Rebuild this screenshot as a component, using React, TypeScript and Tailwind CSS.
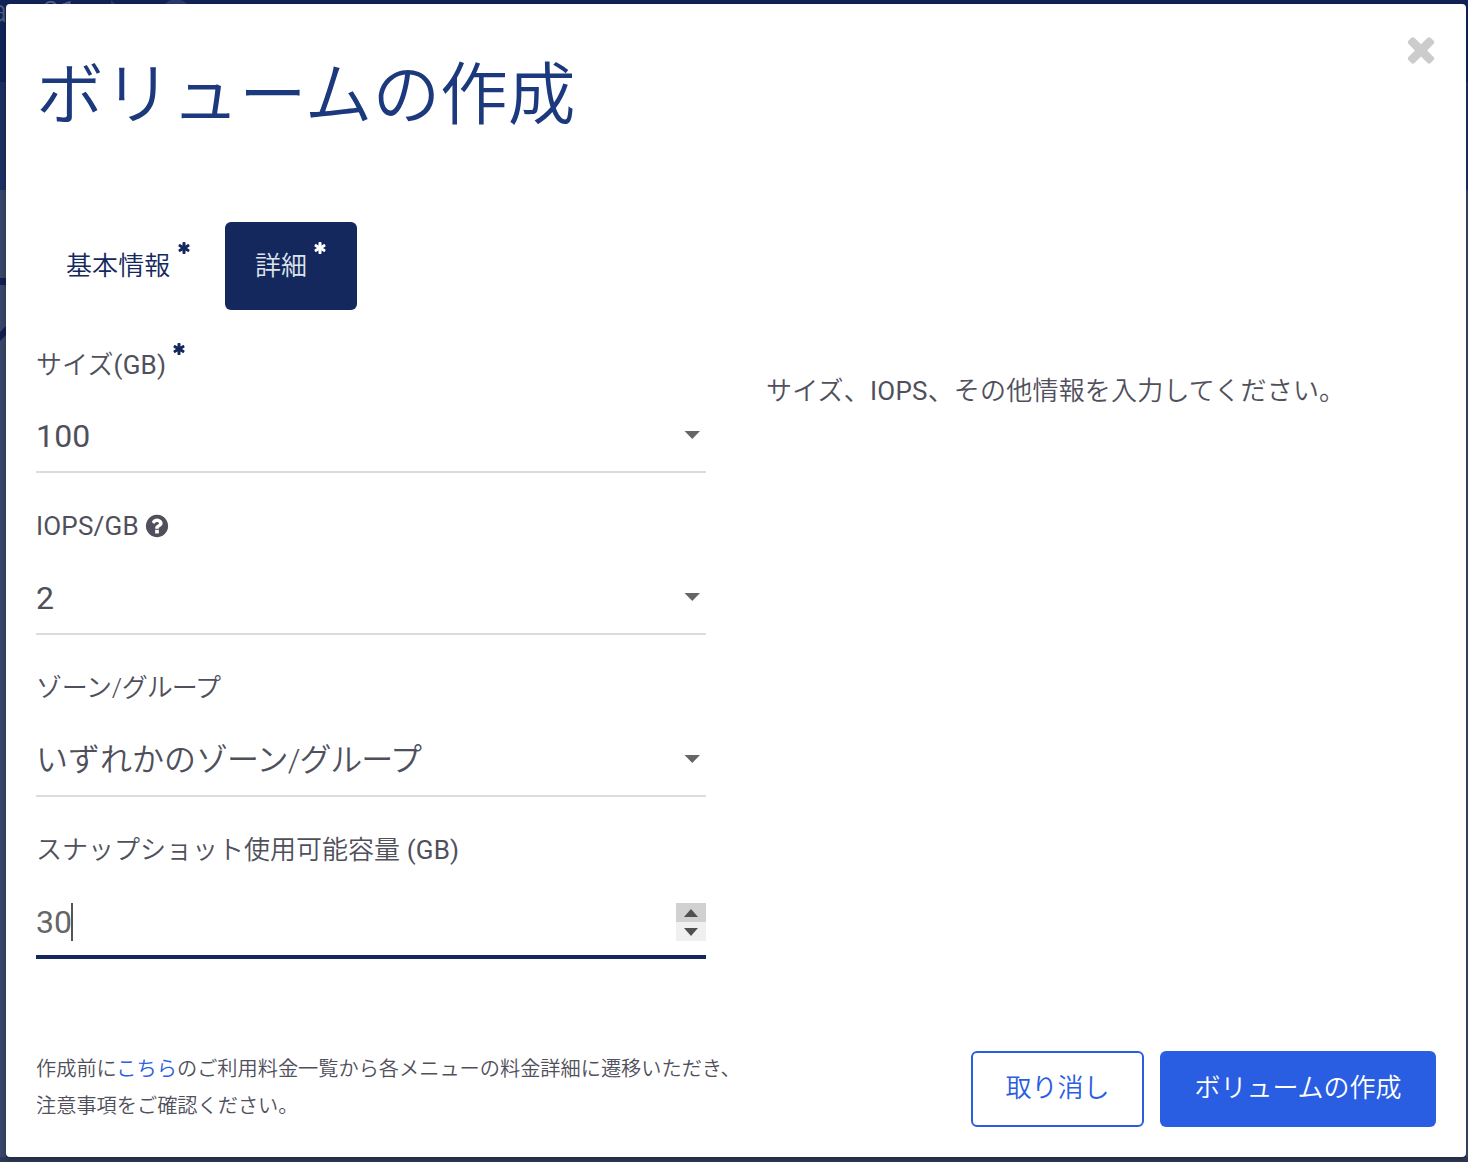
import type { ReactNode } from "react";

interface IconProps {
  className?: string;
}

function TimesIcon({ className }: IconProps) {
  return (
    <svg className={className} viewBox="0 0 1792 1792" fill="currentColor">
      <path d="M1490 1322q0 40-28 68l-136 136q-28 28-68 28t-68-28l-294-294-294 294q-28 28-68 28t-68-28l-136-136q-28-28-28-68t28-68l294-294-294-294q-28-28-28-68t28-68l136-136q28-28 68-28t68 28l294 294 294-294q28-28 68-28t68 28l136 136q28 28 28 68t-28 68l-294 294 294 294q28 28 28 68z" />
    </svg>
  );
}

function AsteriskIcon({ className }: IconProps) {
  return (
    <svg className={className} viewBox="0 0 1792 1792" fill="currentColor">
      <path d="M1546 1050q46 26 59.5 77.5t-12.5 97.5l-64 110q-26 46-77.5 59.5t-97.5-12.5l-266-153v307q0 52-38 90t-90 38h-128q-52 0-90-38t-38-90v-307l-266 153q-46 26-97.5 12.5t-77.5-59.5l-64-110q-26-46-12.5-97.5t59.5-77.5l266-154-266-154q-46-26-59.5-77.5t12.5-97.5l64-110q26-46 77.5-59.5t97.5 12.5l266 153v-307q0-52 38-90t90-38h128q52 0 90 38t38 90v307l266-153q46-26 97.5-12.5t77.5 59.5l64 110q26 46 12.5 97.5t-59.5 77.5l-266 154z" />
    </svg>
  );
}

function QuestionIcon({ className }: IconProps) {
  return (
    <svg className={className} viewBox="0 0 1792 1792" fill="currentColor">
      <path d="M1024 1376v-192q0-14-9-23t-23-9h-192q-14 0-23 9t-9 23v192q0 14 9 23t23 9h192q14 0 23-9t9-23zm256-672q0-88-55.5-163t-138.5-116-170-41q-243 0-371 213-15 24 8 42l132 100q7 6 19 6 16 0 25-12 53-68 86-92 34-24 86-24 48 0 85.5 26t37.5 59q0 38-20 61t-68 45q-63 28-115.5 86.5t-52.5 125.5v36q0 14 9 23t23 9h192q14 0 23-9t9-23q0-19 21.5-49.5t54.5-49.5q32-18 49-28.5t46-35 44.5-48 28-60.5 12.5-81zm384 192q0 209-103 385.5t-279.5 279.5-385.5 103-385.5-103-279.5-279.5-103-385.5 103-385.5 279.5-279.5 385.5-103 385.5 103 279.5 279.5 103 385.5z" />
    </svg>
  );
}

// Latin runs use the regular cut, Japanese runs the lighter one
function Latin({ children }: { children: ReactNode }) {
  return <span className="font-normal tracking-[0.2px]">{children}</span>;
}

interface FieldProps {
  label: ReactNode;
  value: ReactNode;
}

function SelectField({ label, value }: FieldProps) {
  return (
    <div className="flex h-[162px] flex-col">
      <div className="flex h-[52px] items-center pb-[2px] text-[26px] tracking-[0.1px]">{label}</div>
      <div className="mt-[25px] flex h-[38px] items-center justify-between pr-[6px]">
        <span className="pt-[2px] text-[32px] leading-[38px]">{value}</span>
        <svg className="h-[9px] w-4" viewBox="0 0 16 9" fill="#666">
          <path d="M0.5 0H16L8.25 8z" />
        </svg>
      </div>
      <div className="mt-[17px] h-[2px] bg-[#dcdcdd]" />
    </div>
  );
}

export default function App() {
  return (
    <div className="relative h-[1162px] w-[1468px] overflow-hidden bg-[#12235a] font-['Roboto','Noto_Sans_CJK_JP',sans-serif] font-[350] text-[#50505c]">
      {/* Dimmed page behind the dialog */}
      <svg className="absolute inset-0 h-full w-full" viewBox="0 0 1468 1162">
        <path d="M0 82h6v108h-6z" fill="#1f2f62" />
        <path d="M0 190h6v972h-6z" fill="#3a4769" />
        <path d="M0 278h6v7h-6zM0 332l6-6v9l-6 6z" fill="#0f2052" />
        <path d="M1466 82h2v108h-2z" fill="#1f2f62" />
        <path d="M1466 190h2v972h-2z" fill="#3a4769" />
        <path d="M0 1157h1468v5h-1468z" fill="#2e3957" />
        <path d="M111 0l4 4h-4z" fill="#2b3b6e" />
        <circle cx="176" cy="13" r="14" fill="#2b3b6e" />
      </svg>
      <div className="absolute left-[-10px] top-[-5px] text-[32px] font-light leading-none text-[#526083]">a</div>
      <div className="absolute left-[35px] top-[-4px] text-[32px] font-light leading-none text-[#5a668a]">:01</div>

      <div className="relative ml-[6px] mt-1 flex h-[1153px] w-[1460px] flex-col rounded-[4px] bg-white px-[30px] shadow-[0_2px_6px_rgba(0,0,0,0.3)]">
        <header className="flex h-[218px] items-start justify-between">
          <h1 className="pt-[47px] text-[67.7px] leading-[90px] text-[#1b397c]">ボリュームの作成</h1>
          <button className="-mr-[5px] mt-[25px] text-[#ccc]" aria-label="close">
            <TimesIcon className="size-10" />
          </button>
        </header>

        <nav className="flex gap-[5px]">
          <button className="flex h-[88px] w-[184px] items-start pl-[30px] pt-[23px] text-[26px] leading-[42px] tracking-[0.1px] text-[#14285e]">
            基本情報
            <AsteriskIcon className="ml-[7px] mt-[-4px] size-[14px]" />
          </button>
          <button className="flex h-[88px] w-[132px] items-start rounded-[6px] bg-[#14285e] pl-[30px] pt-[23px] text-[26px] leading-[42px] text-[#dfe3ec]">
            詳細
            <AsteriskIcon className="ml-[6px] mt-[-4px] size-[14px] text-white" />
          </button>
        </nav>

        <main className="flex gap-[60px] pt-[29px]">
          <section className="w-[670px]">
            <SelectField
              label={
                <>
                  <span className="pt-[2px]">
                    サイズ<Latin>(GB)</Latin>
                  </span>
                  <AsteriskIcon className="mb-[31px] ml-[6px] size-[14px] text-[#14285e]" />
                </>
              }
              value={<Latin>100</Latin>}
            />
            <SelectField
              label={
                <>
                  <Latin>IOPS/GB</Latin>
                  <QuestionIcon className="ml-[5px] size-[26px]" />
                </>
              }
              value={<Latin>2</Latin>}
            />
            <SelectField
              label={
                <>
                  <span className="tracking-[-0.3px]">ゾーン/</span>
                  <span className="tracking-[-1.1px]">グループ</span>
                </>
              }
              value={
                <>
                  いずれかの<span className="tracking-[-0.9px]">ゾーン/</span>
                  <span className="tracking-[-1.2px]">グループ</span>
                </>
              }
            />

            <div className="flex flex-col">
              <div className="flex h-[52px] items-center whitespace-pre pb-[2px] text-[26px]">
                スナップショット使用可能容量<Latin> (GB)</Latin>
              </div>
              <div className="mt-[26px] flex h-[38px] items-center justify-between text-[#666]">
                <div className="flex h-[38px] items-center">
                  <span className="text-[32px] font-normal leading-[38px]">30</span>
                  <span className="-ml-px h-[38px] w-[2px] bg-[#555]" />
                </div>
                <div className="flex w-[30px] flex-col">
                  <div className="flex h-[19px] items-center justify-center bg-[#d1d1d1]">
                    <svg className="h-2 w-[14px]" viewBox="0 0 14 8" fill="#505050">
                      <path d="M0 8h14L7 0z" />
                    </svg>
                  </div>
                  <div className="flex h-[19px] items-center justify-center bg-[#f0f0f0]">
                    <svg className="h-2 w-[14px]" viewBox="0 0 14 8" fill="#505050">
                      <path d="M0 0h14L7 8z" />
                    </svg>
                  </div>
                </div>
              </div>
              <div className="mt-[14px] h-1 bg-[#14285e]" />
            </div>
          </section>

          <p className="pt-[26px] text-[26px] leading-[52px] tracking-[0.2px]">
            サイズ、<Latin>IOPS</Latin>、その他情報を入力してください。
          </p>
        </main>

        <footer className="mt-[91px] flex items-start justify-between">
          <p className="pt-px text-[20.2px] leading-[37px]">
            作成前に<a className="text-[#2a5ee2]">こちら</a>のご利用料金一覧から各メニューの料金詳細に遷移いただき、
            <br />
            注意事項をご確認ください。
          </p>
          <div className="flex gap-4 pt-px text-[26px]">
            <button className="h-[76px] w-[173px] rounded-[6px] border-2 border-[#2a5ee2] pb-[2px] text-[#2a5ee2]">取り消し</button>
            <button className="h-[76px] w-[276px] rounded-[6px] bg-[#2a5ee2] pb-[2px] text-white">ボリュームの作成</button>
          </div>
        </footer>
      </div>
    </div>
  );
}
